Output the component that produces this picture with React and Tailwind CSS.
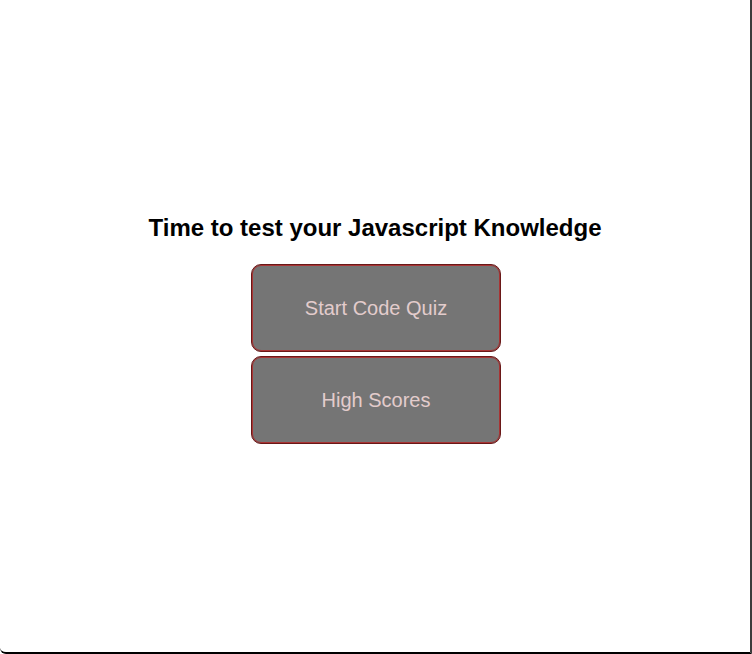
import React from 'react';

// Landing view of the code quiz
const QuizButton = ({ label }) => (
    <button className="w-[250px] h-[88px] rounded-[10px] border border-[#6a1818] shadow-[inset_0_0_0_1px_#a83434] bg-[#757575] text-[#e3cccc] text-[20px] font-['Liberation_Sans',Arial,sans-serif]">
        {label}
    </button>
);

export default function App() {
    return (
        <div className="w-[752px] h-[654px] bg-white border-r-2 border-b-2 border-r-[#3c3c3c] border-b-black rounded-bl-[6px] overflow-hidden">
            <main className="flex flex-col items-center pt-[214px] font-['Liberation_Sans',Arial,sans-serif]">
                <h1 className="text-[24px] leading-[28px] font-bold text-black">
                    Time to test your Javascript Knowledge
                </h1>
                <div className="flex flex-col gap-[4px] mt-[22px] pl-[2px]">
                    <QuizButton label="Start Code Quiz" />
                    <QuizButton label="High Scores" />
                </div>
            </main>
        </div>
    );
}
